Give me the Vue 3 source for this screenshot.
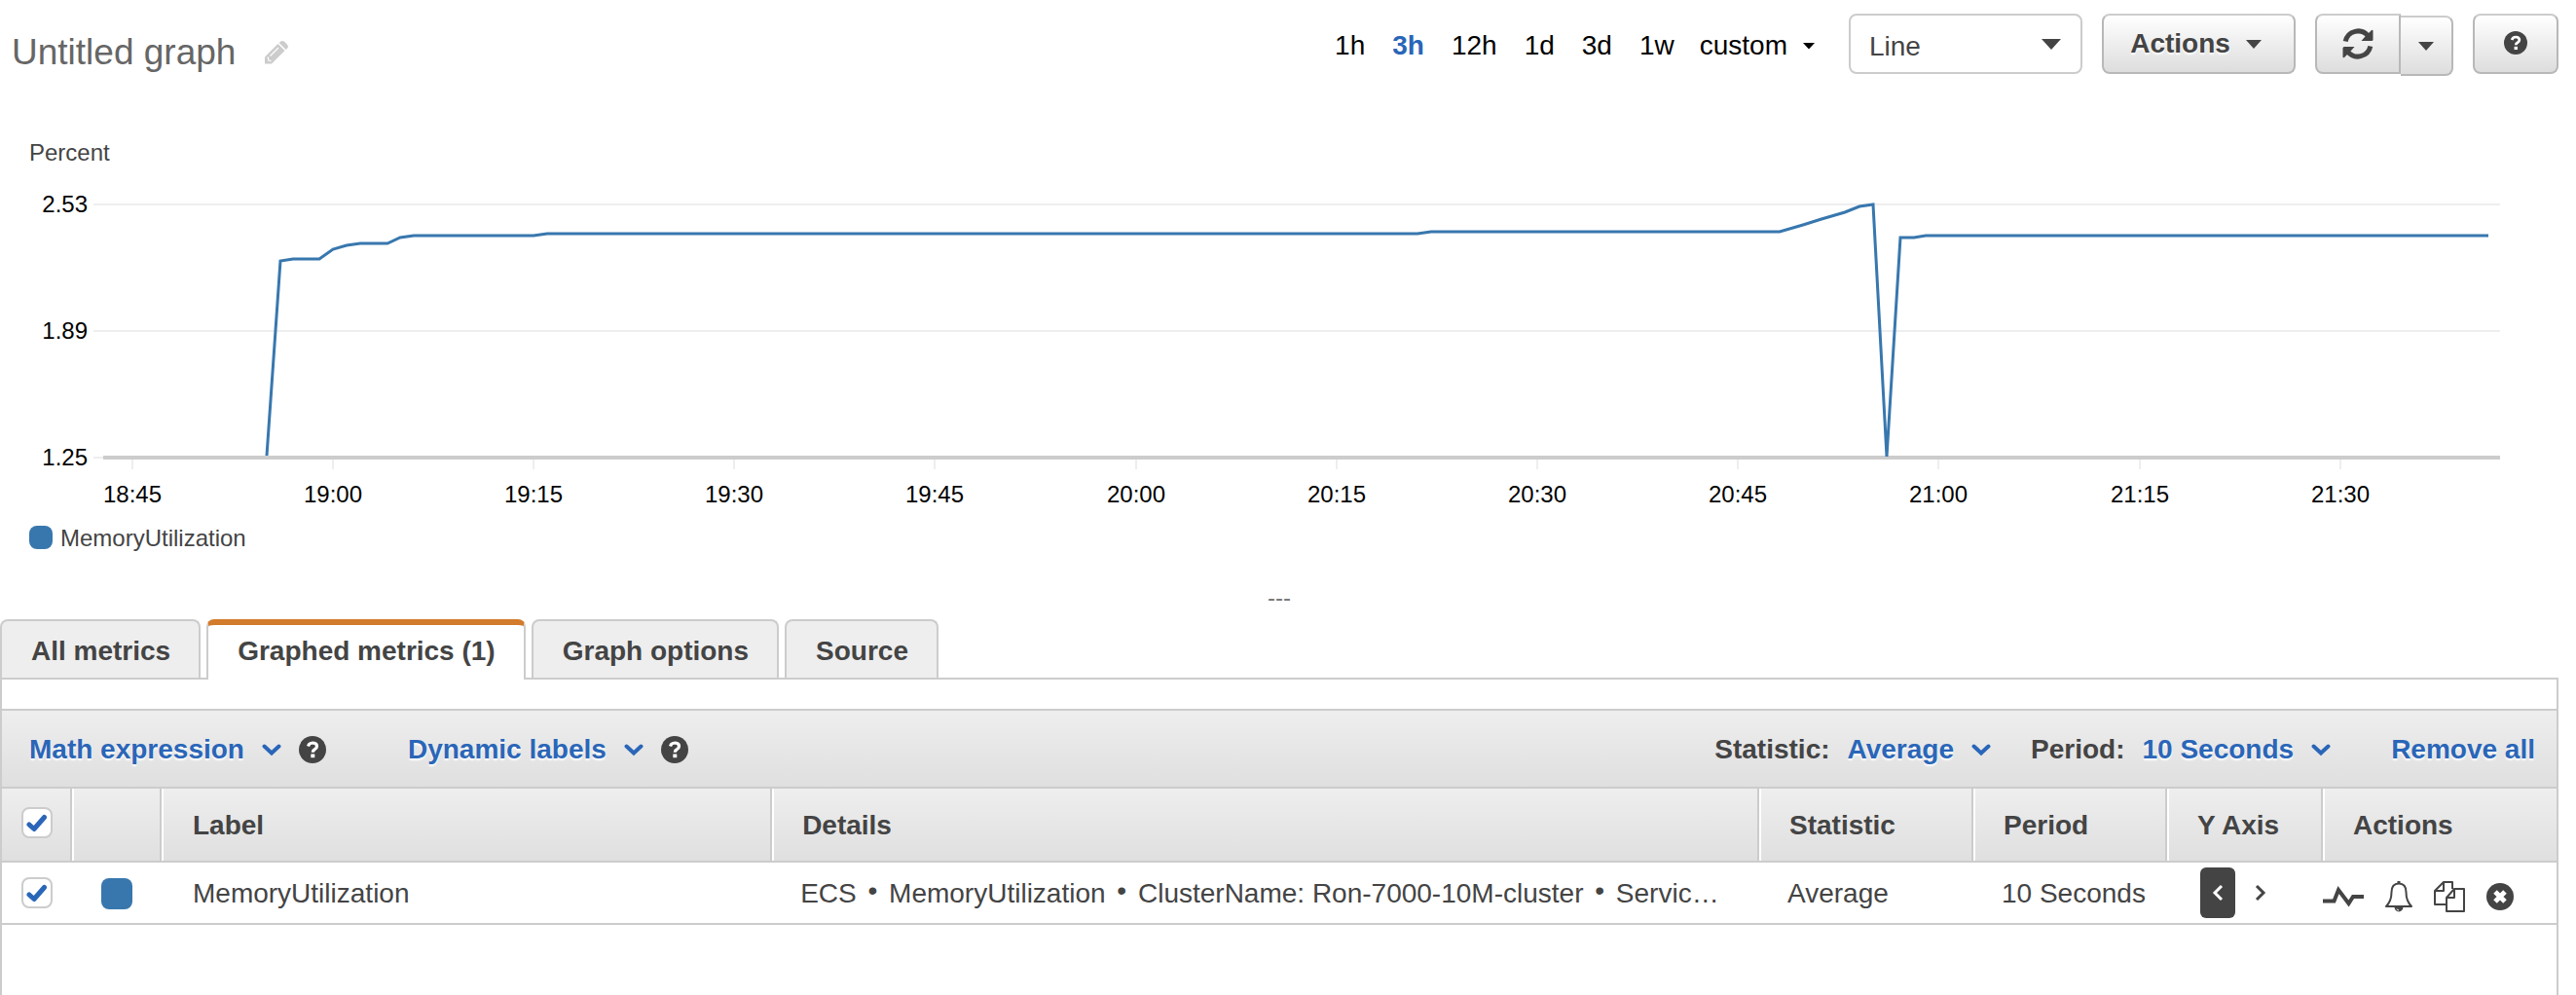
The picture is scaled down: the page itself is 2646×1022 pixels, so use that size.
<script setup>
import { computed, ref } from 'vue'

const title = 'Untitled graph'
const ranges = ['1h', '3h', '12h', '1d', '3d', '1w']
const activeRange = ref('3h')
const tabs = ['All metrics', 'Graphed metrics (1)', 'Graph options', 'Source']
const activeTab = ref('Graphed metrics (1)')
const allSelected = ref(true)
const rowSelected = ref(true)
const details = ['ECS', 'MemoryUtilization', 'ClusterName: Ron-7000-10M-cluster', 'Servic…']

const yTicks = [
  { label: '2.53', y: 210 },
  { label: '1.89', y: 340 },
  { label: '1.25', y: 470 }
]
const xLabels = ['18:45', '19:00', '19:15', '19:30', '19:45', '20:00', '20:15', '20:30', '20:45', '21:00', '21:15', '21:30']
const xTicks = xLabels.map((label, i) => ({ label, x: Math.floor(136 + i * 206.2) }))

const series = [
  [274, 468], [288, 268], [301, 266], [328, 266], [342, 256], [356, 252], [370, 250],
  [398, 250], [411, 244], [425, 242], [548, 242], [562, 240], [1456, 240], [1470, 238],
  [1828, 238], [1852, 231], [1871, 225], [1895, 218], [1910, 212], [1924, 210],
  [1938, 469], [1952, 244], [1966, 244], [1978, 242], [2556, 242]
]
const linePoints = computed(() => series.map((p) => p.join(',')).join(' '))
</script>

<template>
  <div class="page">
    <header class="topbar">
      <h1 class="title">{{ title }}</h1>
      <button class="plain edit" aria-label="Edit title">
        <svg width="24" height="24" viewBox="0 0 24 24" fill="#ccc">
          <path d="M0 23.500V16.500L13.500 3l7 7L7 23.500z" />
          <path d="M14.700 2l1.300-1.200q2.300-1.600 4.400.3l2.400 2.300q2 2.200.4 4.200L21.700 9z" />
          <path d="M3 16.500l1 3.500 2.500.8M5.500 15.500L14 7" fill="none" stroke="#fff" stroke-width="1.200" />
        </svg>
      </button>

      <nav class="ranges">
        <button
          v-for="r in ranges"
          :key="r"
          class="plain range"
          :class="{ active: r === activeRange }"
          @click="activeRange = r"
        >{{ r }}</button>
        <button class="plain range custom">
          custom
          <svg width="14" height="8" viewBox="0 0 14 8"><path d="M1 1h12L7 7.500z" fill="#000" /></svg>
        </button>
      </nav>

      <div class="select-box">
        <select aria-label="Graph type">
          <option>Line</option>
        </select>
        <svg width="20" height="11" viewBox="0 0 20 11"><path d="M0 0h20L10 11z" fill="#444" /></svg>
      </div>

      <button class="btn actions">
        Actions
        <svg width="16" height="9" viewBox="0 0 16 9"><path d="M0 0h16L8 9z" fill="#444" /></svg>
      </button>

      <div class="split">
        <button class="btn refresh" aria-label="Refresh">
          <svg width="32" height="32" viewBox="0 0 32 32">
            <g>
              <path d="M3.200 13.500A13.200 13.200 0 0 1 26.500 8" fill="none" stroke="#444" stroke-width="5" />
              <path d="M26 6l4-4q1.500-.8 1.500 1v8.500q0 1.500-1.500 1.500H19.500L23 9z" fill="#444" />
            </g>
            <g transform="rotate(180 16 16)">
              <path d="M3.200 13.500A13.200 13.200 0 0 1 26.500 8" fill="none" stroke="#444" stroke-width="5" />
              <path d="M26 6l4-4q1.500-.8 1.500 1v8.500q0 1.500-1.500 1.500H19.500L23 9z" fill="#444" />
            </g>
          </svg>
        </button>
        <button class="btn more" aria-label="Refresh options">
          <svg width="16" height="9" viewBox="0 0 16 9"><path d="M0 0h16L8 9z" fill="#444" /></svg>
        </button>
      </div>

      <button class="btn help" aria-label="Help">
        <svg width="24" height="24" viewBox="0 0 28 28">
          <circle cx="14" cy="14" r="14" fill="#444" />
          <path d="M9.500 10.500Q10.500 7 14.200 7q4.300.2 4.300 3.500 0 2-2.200 3.200-2 1-2 3" fill="none" stroke="#fff" stroke-width="3.200" />
          <rect x="12.300" y="18.500" width="4" height="3.700" fill="#fff" />
        </svg>
      </button>
    </header>

    <section class="graph">
      <svg class="chart" viewBox="0 140 2628 390" role="img" aria-label="MemoryUtilization">
        <text x="30" y="165" fill="#444">Percent</text>
        <g v-for="t in yTicks" :key="t.label">
          <line x1="96" x2="2568" :y1="t.y" :y2="t.y" stroke="#eee" stroke-width="2" />
          <text x="90" :y="t.y + 8" text-anchor="end">{{ t.label }}</text>
        </g>
        <g v-for="t in xTicks" :key="t.label">
          <line :x1="t.x" :x2="t.x" y1="472" y2="482" stroke="#eee" stroke-width="2" />
          <text :x="t.x" y="516" text-anchor="middle">{{ t.label }}</text>
        </g>
        <line x1="106" x2="2568" y1="470" y2="470" stroke="#ccc" stroke-width="4" />
        <polyline :points="linePoints" fill="none" stroke="#3877ae" stroke-width="3" />
      </svg>
      <div class="legend"><span class="legend-swatch"></span><span class="legend-text">MemoryUtilization</span></div>
    </section>

    <div class="splitter">---</div>

    <nav class="tabs">
      <button
        v-for="t in tabs"
        :key="t"
        class="tab"
        :class="{ current: t === activeTab }"
        @click="activeTab = t"
      >{{ t }}</button>
    </nav>

    <section class="panel">
      <div class="toolbar">
        <template v-for="name in ['Math expression', 'Dynamic labels']" :key="name">
          <button class="plain link">
            {{ name }}
            <svg width="20" height="13" viewBox="0 0 20 13"><path d="M2.500 2.500L10 9.500l7.500-7" class="chev" /></svg>
          </button>
          <button class="plain info" :aria-label="name + ' help'">
            <svg width="28" height="28" viewBox="0 0 28 28">
              <circle cx="14" cy="14" r="14" fill="#444" />
              <path d="M9.500 10.500Q10.500 7 14.200 7q4.300.2 4.300 3.500 0 2-2.200 3.200-2 1-2 3" fill="none" stroke="#fff" stroke-width="3.200" />
              <rect x="12.300" y="18.500" width="4" height="3.700" fill="#fff" />
            </svg>
          </button>
        </template>
        <span class="spacer"></span>
        <span class="caption">Statistic:</span>
        <button class="plain link">
          Average
          <svg width="20" height="13" viewBox="0 0 20 13"><path d="M2.500 2.500L10 9.500l7.500-7" class="chev" /></svg>
        </button>
        <span class="caption second">Period:</span>
        <button class="plain link">
          10 Seconds
          <svg width="20" height="13" viewBox="0 0 20 13"><path d="M2.500 2.500L10 9.500l7.500-7" class="chev" /></svg>
        </button>
        <button class="plain link remove">Remove all</button>
      </div>

      <table>
        <colgroup>
          <col class="c-check" /><col class="c-color" /><col class="c-label" /><col />
          <col class="c-stat" /><col class="c-period" /><col class="c-axis" /><col class="c-actions" />
        </colgroup>
        <thead>
          <tr>
            <th class="check">
              <label class="tick">
                <input v-model="allSelected" type="checkbox" aria-label="Select all" />
                <svg v-if="allSelected" width="24" height="20" viewBox="0 0 24 20"><path d="M4 12l5 4.500L19.500 4.500" /></svg>
              </label>
            </th>
            <th></th>
            <th class="name">Label</th>
            <th>Details</th>
            <th>Statistic</th>
            <th>Period</th>
            <th>Y Axis</th>
            <th>Actions</th>
          </tr>
        </thead>
        <tbody>
          <tr>
            <td class="check">
              <label class="tick">
                <input v-model="rowSelected" type="checkbox" aria-label="Select MemoryUtilization" />
                <svg v-if="rowSelected" width="24" height="20" viewBox="0 0 24 20"><path d="M4 12l5 4.500L19.500 4.500" /></svg>
              </label>
            </td>
            <td class="color"><span class="swatch"></span></td>
            <td class="name">MemoryUtilization</td>
            <td><template v-for="(d, i) in details" :key="d"><span v-if="i" class="bullet"> • </span>{{ d }}</template></td>
            <td>Average</td>
            <td>10 Seconds</td>
            <td class="axis">
              <div class="axis-group">
                <button class="plain axis-btn on" aria-label="Left axis">
                  <svg width="12" height="18" viewBox="0 0 12 18"><path d="M10 2L3 9l7 7" stroke="#fff" /></svg>
                </button>
                <button class="plain axis-btn" aria-label="Right axis">
                  <svg width="12" height="18" viewBox="0 0 12 18"><path d="M2 2l7 7-7 7" stroke="#444" /></svg>
                </button>
              </div>
            </td>
            <td class="row-actions">
              <div class="icon-group">
                <button class="plain" aria-label="Anomaly detection">
                  <svg width="42" height="24" viewBox="0 0 42 24">
                    <path d="M0 16.500h11.500L16 5l10.500 14L31 12h11" fill="none" stroke="#444" stroke-width="4" />
                  </svg>
                </button>
                <button class="plain" aria-label="Create alarm">
                  <svg width="28" height="32" viewBox="1 0 28 32">
                    <path d="M15 2.500c-5.500 0-7.500 4-7.500 9 0 6-1 10-5.500 14.500h26c-4.500-4.500-5.500-8.500-5.500-14.500 0-5-2-9-7.500-9z" fill="none" stroke="#444" stroke-width="2" stroke-linejoin="round" />
                    <path d="M13.500 0h3v3h-3zM10.500 26.500h9a4.500 5 0 0 1-9 0z" fill="#444" />
                    <path d="M13 28.500q.5 1.500 2 1.500" fill="none" stroke="#fff" stroke-width="1" />
                  </svg>
                </button>
                <button class="plain" aria-label="Duplicate">
                  <svg width="32" height="32" viewBox="0 0 32 32" fill="none" stroke="#444" stroke-width="2" stroke-linejoin="round">
                    <path d="M12 24H1V10l9-9h9v7M10 1v9H1" />
                    <path d="M13 17v14h18V8H21zM21 8v9h-8" fill="#fff" />
                  </svg>
                </button>
                <button class="plain" aria-label="Remove">
                  <svg width="28" height="28" viewBox="0 0 28 28">
                    <circle cx="14" cy="14" r="14" fill="#444" />
                    <path d="M9 9l10 10M19 9L9 19" stroke="#fff" stroke-width="5" />
                  </svg>
                </button>
              </div>
            </td>
          </tr>
        </tbody>
      </table>
    </section>
  </div>
</template>

<style>
body {
  margin: 0;
  background: #fff;
}
</style>

<style scoped>
.page {
  box-sizing: border-box;
  min-height: 100vh;
  padding-right: 18px;
  display: flex;
  flex-direction: column;
  font-family: "Liberation Sans", Arial, sans-serif;
  font-size: 28px;
  line-height: 32px;
  color: #444;
}
button,
select {
  font: inherit;
  color: inherit;
  margin: 0;
}
svg {
  display: block;
  flex: none;
}
.plain {
  border: 0;
  padding: 0;
  background: none;
}

/* top bar */
.topbar {
  display: flex;
  align-items: flex-start;
  padding: 14px 0 62px 12px;
}
.title {
  margin: 19px 30px 0 0;
  font-size: 37px;
  line-height: 42px;
  font-weight: 400;
  color: #666;
}
.edit {
  margin-top: 28px;
}
.ranges {
  display: flex;
  gap: 28px;
  margin: 17px 34px 0 auto;
  color: #000;
}
.range.active {
  font-weight: 700;
  color: #2a66b8;
}
.custom {
  display: flex;
  align-items: center;
  gap: 15px;
  margin-left: -2px;
}
.select-box {
  display: grid;
  align-items: center;
  width: 240px;
  margin-right: 20px;
}
.select-box > * {
  grid-area: 1 / 1;
}
.select-box svg {
  justify-self: end;
  margin-right: 22px;
  pointer-events: none;
}
select {
  appearance: none;
  width: 100%;
  height: 62px;
  padding: 6px 19px 0;
  border: 2px solid #ccc;
  border-radius: 8px;
  background: #fff;
}
.btn {
  box-sizing: border-box;
  display: flex;
  align-items: center;
  justify-content: center;
  height: 62px;
  padding: 0;
  border: 2px solid #b8b8b8;
  border-top-color: #ccc;
  border-radius: 8px;
  background: linear-gradient(#fff, #ddd);
  font-weight: 700;
  text-shadow: 0 2px 2px #fff;
}
.actions {
  width: 199px;
  gap: 16px;
  padding-right: 6px;
  margin-right: 20px;
}
.split {
  display: flex;
  margin-right: 20px;
}
.refresh {
  width: 88px;
  border-radius: 8px 0 0 8px;
}
.more {
  width: 54px;
  margin-top: 2px;
  border-left: 0;
  border-radius: 0 8px 8px 0;
}
.help {
  width: 88px;
  padding-bottom: 3px;
}

/* graph */
.chart {
  width: 100%;
  height: auto;
  font-size: 24px;
}
.legend {
  display: flex;
  align-items: center;
  gap: 8px;
  height: 24px;
  margin: 10px 0 0 30px;
  font-size: 24px;
  line-height: 24px;
}
.legend-swatch {
  width: 24px;
  height: 24px;
  border-radius: 8px;
  background: #3877ae;
}
.legend-text {
  padding-top: 2px;
}
.splitter {
  margin: 38px 0 10px;
  font-size: 24px;
  line-height: 24px;
  text-align: center;
  color: #777;
}

/* tabs */
.tabs {
  display: flex;
  gap: 6px;
}
.tab {
  height: 60px;
  padding: 4px 29px 0 30px;
  border: 2px solid #ccc;
  border-bottom: 0;
  border-radius: 8px 8px 0 0;
  background: #eee;
  font-weight: 700;
}
.tab.current {
  height: 62px;
  margin-bottom: -2px;
  padding-bottom: 6px;
  border-top: 6px solid #d37b2c;
  background: #fff;
  z-index: 1;
}

/* panel */
.panel {
  flex: 1;
  border: 2px solid #ccc;
  border-bottom: 0;
  padding-top: 30px;
}
.toolbar {
  box-sizing: border-box;
  display: flex;
  align-items: center;
  height: 82px;
  padding: 2px 22px 0 28px;
  border: solid #ccc;
  border-width: 2px 0;
  background: linear-gradient(#eee, #dfdfdf);
  font-weight: 700;
}
.link {
  display: flex;
  align-items: center;
  gap: 18px;
  color: #2a66b8;
  text-shadow: 0 2px 2px #fff;
}
.info {
  margin: 0 84px 0 18px;
}
.spacer {
  flex: 1;
}
.caption {
  margin-right: 18px;
}
.second {
  margin-left: 41px;
}
.remove {
  margin-left: 62px;
}

/* metrics table */
table {
  width: 100%;
  table-layout: fixed;
  border-collapse: separate;
  border-spacing: 0;
}
.c-check { width: 72px; }
.c-color { width: 92px; }
.c-label { width: 23.9%; }
.c-stat { width: 220px; }
.c-period { width: 199px; }
.c-axis { width: 160px; }
.c-actions { width: 240px; }
thead tr {
  background: linear-gradient(#eee, #dfdfdf);
}
th,
td {
  box-sizing: border-box;
  padding: 2px 0 0 29px;
  text-align: left;
  white-space: nowrap;
  border-bottom: 2px solid #ccc;
}
th {
  height: 76px;
  border-right: 2px solid #ccc;
  box-shadow: inset 2px 0 #fff;
  padding-left: 31px;
}
th:first-child {
  box-shadow: none;
}
th:last-child {
  border-right: 0;
}
td {
  height: 64px;
}
th.check {
  padding: 0 0 4px 20px;
}
td.check {
  padding: 0 0 0 20px;
}
th.name,
td.name {
  padding-left: 32px;
}
.color {
  padding-left: 30px;
}
.bullet {
  padding: 0 4px;
  line-height: 24px;
  vertical-align: 3px;
  white-space: pre;
}
.tick {
  display: grid;
  place-items: center;
  width: 32px;
}
.tick > * {
  grid-area: 1 / 1;
}
.tick input {
  appearance: none;
  box-sizing: border-box;
  width: 32px;
  height: 32px;
  margin: 0;
  border: 2px solid #ccc;
  border-radius: 8px;
  background: #fff;
}
.tick path {
  fill: none;
  stroke: #2a66b8;
  stroke-width: 5;
  stroke-linecap: round;
  stroke-linejoin: round;
}
.tick svg {
  pointer-events: none;
}
.swatch {
  display: block;
  width: 32px;
  height: 32px;
  border-radius: 8px;
  background: #3877ae;
}
.chev {
  fill: none;
  stroke: #2a66b8;
  stroke-width: 4;
  stroke-linecap: round;
}
.axis {
  padding: 0 0 0 34px;
}
.axis-group {
  display: flex;
  gap: 8px;
}
.axis-btn {
  display: grid;
  place-items: center;
  width: 36px;
  height: 52px;
  border-radius: 6px;
}
.axis-btn.on {
  background: #444;
}
.axis-btn path {
  fill: none;
  stroke-width: 3;
}
.row-actions {
  padding: 8px 0 0;
}
.icon-group {
  display: flex;
  align-items: center;
  gap: 22px;
}
</style>
